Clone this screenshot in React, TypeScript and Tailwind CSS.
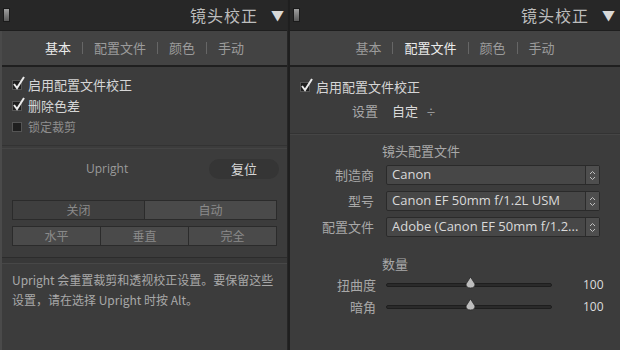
import React from 'react'

const font = { fontFamily: '"Noto Sans CJK SC", "Noto Sans", sans-serif' }

function Header({ right }: { right: string }) {
  return (
    <div className="h-[31px] shrink-0 bg-[#272727] flex items-center border-b border-[#1e1e1e]">
      <div className="shrink-0 ml-[3px] w-[7px] h-[14px] bg-gradient-to-b from-[#a0a0a0] to-[#5a5a5a] border border-[#1a1a1a]" />
      <div className="flex-1" />
      <span className="text-[16px] text-[#bdbdbd] tracking-[1px]">镜头校正</span>
      <span className={`ml-[13px] ${right} text-[13px] text-[#d8d8d8]`}>▼</span>
    </div>
  )
}

function Tabs({ active }: { active: number }) {
  const tabs = ['基本', '配置文件', '颜色', '手动']
  return (
    <div className="h-[36px] shrink-0 bg-[#434343] flex items-center justify-center border-b-2 border-[#1f1f1f] text-[13px]">
      {tabs.map((t, i) => (
        <React.Fragment key={t}>
          {i > 0 && <span className="mx-[11px] w-px h-[12px] bg-[#666]" />}
          <span className={i === active ? 'text-[#ececec]' : 'text-[#9c9c9c]'}>{t}</span>
        </React.Fragment>
      ))}
    </div>
  )
}

function Check({ label, on = true, dim = false }: { label: string; on?: boolean; dim?: boolean }) {
  return (
    <div className="flex items-center h-[21px]">
      <div className="relative w-[10px] h-[10px] bg-[#1f1f1f] border border-[#555]">
        {on && (
          <svg className="absolute -left-[1px] -top-[5px]" width="14" height="15" viewBox="0 0 14 15">
            <path d="M2 8 L5 12 L12 1" stroke="#eaeaea" strokeWidth="2" fill="none" />
          </svg>
        )}
      </div>
      <span className={`ml-[6px] ${dim ? 'text-[12px] text-[#8e8e8e]' : 'text-[13px] text-[#d6d6d6]'}`}>{label}</span>
    </div>
  )
}

function Stepper() {
  return (
    <div className="w-[14px] h-[18px] bg-[#4e4e4e] border-l border-[#2c2c2c] flex flex-col items-center justify-center">
      <svg width="7" height="11" viewBox="0 0 7 11">
        <path d="M1 4 L3.5 1.5 L6 4" stroke="#c0c0c0" strokeWidth="1" fill="none" />
        <path d="M1 7 L3.5 9.5 L6 7" stroke="#c0c0c0" strokeWidth="1" fill="none" />
      </svg>
    </div>
  )
}

function SelectRow({ label, value }: { label: string; value: string }) {
  return (
    <div className="flex items-center h-[26px]">
      <span className="w-[96px] text-right text-[13px] text-[#a8a8a8] pr-[12px]">{label}</span>
      <div className="w-[214px] h-[20px] bg-[#474747] border border-[#2a2a2a] rounded-[2px] flex items-center">
        <span className="flex-1 pl-[5px] text-[13px] text-[#dadada] truncate" style={{ fontFamily: '"Open Sans", "Noto Sans CJK SC", sans-serif' }}>{value}</span>
        <Stepper />
      </div>
    </div>
  )
}

function SliderRow({ label }: { label: string }) {
  return (
    <div className="flex items-center h-[22px]">
      <span className="w-[96px] text-right text-[13px] text-[#a8a8a8] pr-[10px]">{label}</span>
      <div className="relative w-[166px] h-[4px] bg-[#2a2a2a] rounded-full border border-[#1e1e1e]">
        <svg className="absolute left-[78px] -top-[7px]" width="11" height="12" viewBox="0 0 11 12">
          <path d="M5.5 0 L10 7 Q10 11 5.5 11 Q1 11 1 7 Z" fill="#bdbdbd" stroke="#2a2a2a" strokeWidth="0.8" />
        </svg>
      </div>
      <span className="ml-[31px] text-[12px] text-[#dcdcdc]" style={{ fontFamily: '"Open Sans", sans-serif' }}>100</span>
    </div>
  )
}

function LeftPanel() {
  const btn = 'flex-1 h-[20px] flex items-center justify-center text-[12px] text-[#8a8a8a] border border-[#2b2b2b]'
  return (
    <div className="w-[288px] h-full flex flex-col bg-[#3c3c3c] border-r border-[#262626]">
      <Header right="mr-[3px]" />
      <div className="flex-1 flex flex-col border-l-2 border-[#4a4a4a]">
        <Tabs active={0} />
        <div className="px-[10px] pt-[7px] pb-[8px] border-b border-[#333]">
          <Check label="启用配置文件校正" />
          <Check label="删除色差" />
          <Check label="锁定裁剪" on={false} dim />
        </div>
        <div className="border-t border-[#454545] flex items-center h-[40px] mt-[2px]">
          <span className="ml-[84px] text-[12px] text-[#9a9a9a]" style={{ fontFamily: '"Open Sans", sans-serif' }}>Upright</span>
          <div className="ml-auto mr-[8px] w-[70px] h-[20px] rounded-full bg-[#353535] flex items-center justify-center text-[13px] text-[#d6d6d6]">复位</div>
        </div>
        <div className="px-[10px] pt-[12px]">
          <div className="flex">
            <div className={`${btn} bg-[#3f3f3f]`}>关闭</div>
            <div className={`${btn} bg-[#4a4a4a] border-l-0`}>自动</div>
          </div>
          <div className="flex mt-[6px]">
            <div className={`${btn} bg-[#4a4a4a]`}>水平</div>
            <div className={`${btn} bg-[#4a4a4a] border-l-0`}>垂直</div>
            <div className={`${btn} bg-[#4a4a4a] border-l-0`}>完全</div>
          </div>
        </div>
        <div className="mt-[11px] border-t border-[#2c2c2c] h-[6px] bg-[#383838]" />
        <div className="border-t border-[#474747] px-[10px] pt-[6px] text-[12px] leading-[20px] text-[#a8a8a8]">
          Upright 会重置裁剪和透视校正设置。要保留这些设置，请在选择 Upright 时按 Alt。
        </div>
      </div>
    </div>
  )
}

function RightPanel() {
  return (
    <div className="flex-1 h-full flex flex-col bg-[#3c3c3c] border-l-2 border-[#1f1f1f]">
      <Header right="mr-[5px]" />
      <div className="flex-1 flex flex-col">
        <Tabs active={1} />
        <div className="px-[10px] pt-[9px] pb-[10px] border-b border-[#333]">
          <Check label="启用配置文件校正" />
          <div className="flex items-center h-[24px] mt-[2px]">
            <span className="ml-[52px] text-[13px] text-[#a8a8a8]">设置</span>
            <span className="ml-[14px] text-[13px] text-[#dadada]">自定</span>
            <span className="ml-[8px] text-[10px] text-[#aaa]">÷</span>
          </div>
        </div>
        <div className="border-t border-[#454545] pt-[5px]">
          <div className="ml-[92px] text-[13px] text-[#a8a8a8] h-[22px] leading-[22px]">镜头配置文件</div>
          <SelectRow label="制造商" value="Canon" />
          <SelectRow label="型号" value="Canon EF 50mm f/1.2L USM" />
          <SelectRow label="配置文件" value="Adobe (Canon EF 50mm f/1.2..." />
          <div className="ml-[92px] mt-[14px] text-[13px] text-[#a8a8a8] h-[20px] leading-[20px]">数量</div>
          <SliderRow label="扭曲度" />
          <SliderRow label="暗角" />
        </div>
      </div>
    </div>
  )
}

export default function App() {
  return (
    <div className="w-[620px] h-[350px] flex bg-[#3c3c3c] overflow-hidden" style={font}>
      <LeftPanel />
      <RightPanel />
    </div>
  )
}
